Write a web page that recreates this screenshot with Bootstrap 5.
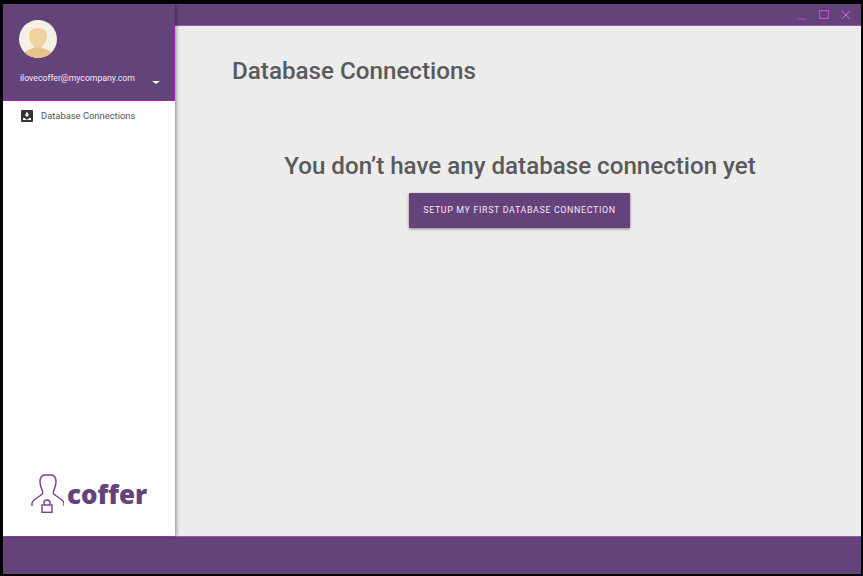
<!DOCTYPE html>
<html>
<head>
  <title>Coffer</title>
  <meta charset="UTF-8">
  <link href="https://cdn.jsdelivr.net/npm/bootstrap@5.3.0/dist/css/bootstrap.min.css" rel="stylesheet">
  <style>
    html, body { height: 100%; }
    body { background: #000; font-family: Roboto, sans-serif; padding: 4px 2px 2px 3px; overflow: hidden; }
    .app-frame { height: 570px; }
    .app-upper { height: 532px; min-height: 0; }
    .side-panel { width: 172px; background: #fff; box-shadow: 1px 0 4px rgba(0,0,0,.45); z-index: 2; }
    .side-head { height: 97px; background: #63437a linear-gradient(#a01fb0, #a01fb0) right 22px / 1px 100% no-repeat; border-bottom: 1px solid #a01fb0; padding: 16px 15px 0 16px; }
    .side-avatar { width: 38px; height: 38px; display: block; }
    .side-mail { color: #fbe6fb; font-size: 8.7px; margin: 14px 0 0 1px; line-height: 12px; }
    .side-caret { width: 0; height: 0; border-left: 4px solid transparent; border-right: 4px solid transparent; border-top: 3.5px solid #fff; margin-top: 23px; }
    .side-item { height: 30px; padding-left: 18px; color: #555; font-size: 9.4px; gap: 8px; }
    .logo-word { color: #63437a; font-family: "Noto Sans", sans-serif; font-weight: 900; font-size: 26px; line-height: 30px; margin-bottom: 4px; }
    .logo-wrap { padding: 0 0 23px 28px; gap: 3px; }
    .title-bar { height: 22px; background: #63437a; border-bottom: 1px solid #a550b8; gap: 12px; padding-right: 10px; }
    .main-pane { background: #ececec; color: #5a5a5a; }
    .main-title { font-size: 24.2px; font-weight: 500; line-height: 30px; margin: 30px 0 0 57px; }
    .main-empty { font-size: 24.15px; font-weight: 500; line-height: 30px; margin: 65px 0 0 0; padding-left: 4px; }
    .btn-row { padding-left: 3px; }
    .setup-btn { width: 221px; height: 35px; background: #63437a; color: #fbe6fb; font-size: 8.9px; letter-spacing: .64px; border: 0; border-radius: 1px; margin-top: 12px; box-shadow: 0 1px 3px rgba(0,0,0,.45); }
    .foot-bar { height: 38px; background: #63437a; border-top: 1px solid #a550b8; }
  </style>
</head>
<body>

<div class="app-frame d-flex flex-column">
  <div class="app-upper d-flex">
    <div class="side-panel d-flex flex-column">
      <div class="side-head">
        <svg class="side-avatar" viewBox="0 0 38 38">
          <defs><clipPath id="faceclip"><circle cx="19" cy="19" r="19"/></clipPath></defs>
          <circle cx="19" cy="19" r="19" fill="#f4f0e6"/>
          <g clip-path="url(#faceclip)">
            <path d="M3 38c1-6 5-8 12-10l1-3h6l1 3c7 2 11 4 12 10z" fill="#e8c48c"/>
            <path d="M19 8c7 0 9 4 9 8 0 6-5 12-9 12s-9-6-9-12c0-4 2-8 9-8z" fill="#f2d29c"/>
          </g>
        </svg>
        <div class="d-flex justify-content-between align-items-start">
          <div class="side-mail">ilovecoffer@mycompany.com</div>
          <div class="side-caret"></div>
        </div>
      </div>
      <div class="side-item d-flex align-items-center">
        <svg width="12" height="12" viewBox="0 0 12 12">
          <path d="M1 0h10a1 1 0 0 1 1 1v10a1 1 0 0 1-1 1H1a1 1 0 0 1-1-1V1a1 1 0 0 1 1-1z" fill="#333"/>
          <path d="M2 8h2l1 1.500h2L8 8h2v2H2z" fill="#fff"/>
          <path d="M5 2.500h2v2h1.500L6 7 3.500 4.500H5z" fill="#fff"/>
        </svg>
        <span>Database Connections</span>
      </div>
      <div class="logo-wrap d-flex align-items-end mt-auto">
        <svg width="33" height="39" viewBox="0 0 33 39" fill="none" stroke="#7b3a91" stroke-width="1.400">
          <path d="M1 32v-3c0-1 1-2 2-3l7-5c2-1 2-3 1-5-1-3-2-5-2-8 0-5 2-7 5-7h6c3 0 5 2 5 7 0 3-1 5-2 8-1 2-1 4 1 5l7 5c1 1 2 2 2 3v3"/>
          <rect x="11" y="31" width="10" height="7.300"/>
          <path d="M13 31v-2a3 3 0 0 1 6 0v2"/>
        </svg>
        <span class="logo-word">coffer</span>
      </div>
    </div>
    <div class="flex-grow-1 d-flex flex-column">
      <div class="title-bar d-flex align-items-center justify-content-end">
        <svg width="10" height="10" viewBox="0 0 10 10"><path d="M0 9h9" stroke="#b23fc4" stroke-width="1.300"/></svg>
        <svg width="10" height="10" viewBox="0 0 10 10"><rect x=".5" y=".5" width="9" height="8" fill="none" stroke="#c44fd6" stroke-width="1.200"/></svg>
        <svg width="10" height="10" viewBox="0 0 10 10"><path d="M1 1l8 8M9 1l-8 8" stroke="#d070e0"/></svg>
      </div>
      <div class="main-pane flex-grow-1 d-flex flex-column">
        <div class="main-title">Database Connections</div>
        <div class="main-empty text-center">You don’t have any database connection yet</div>
        <div class="btn-row text-center">
          <button class="setup-btn" type="button">SETUP MY FIRST DATABASE CONNECTION</button>
        </div>
      </div>
    </div>
  </div>
  <div class="foot-bar"></div>
</div>

<script src="https://cdn.jsdelivr.net/npm/bootstrap@5.3.0/dist/js/bootstrap.bundle.min.js"></script>
</body>
</html>
